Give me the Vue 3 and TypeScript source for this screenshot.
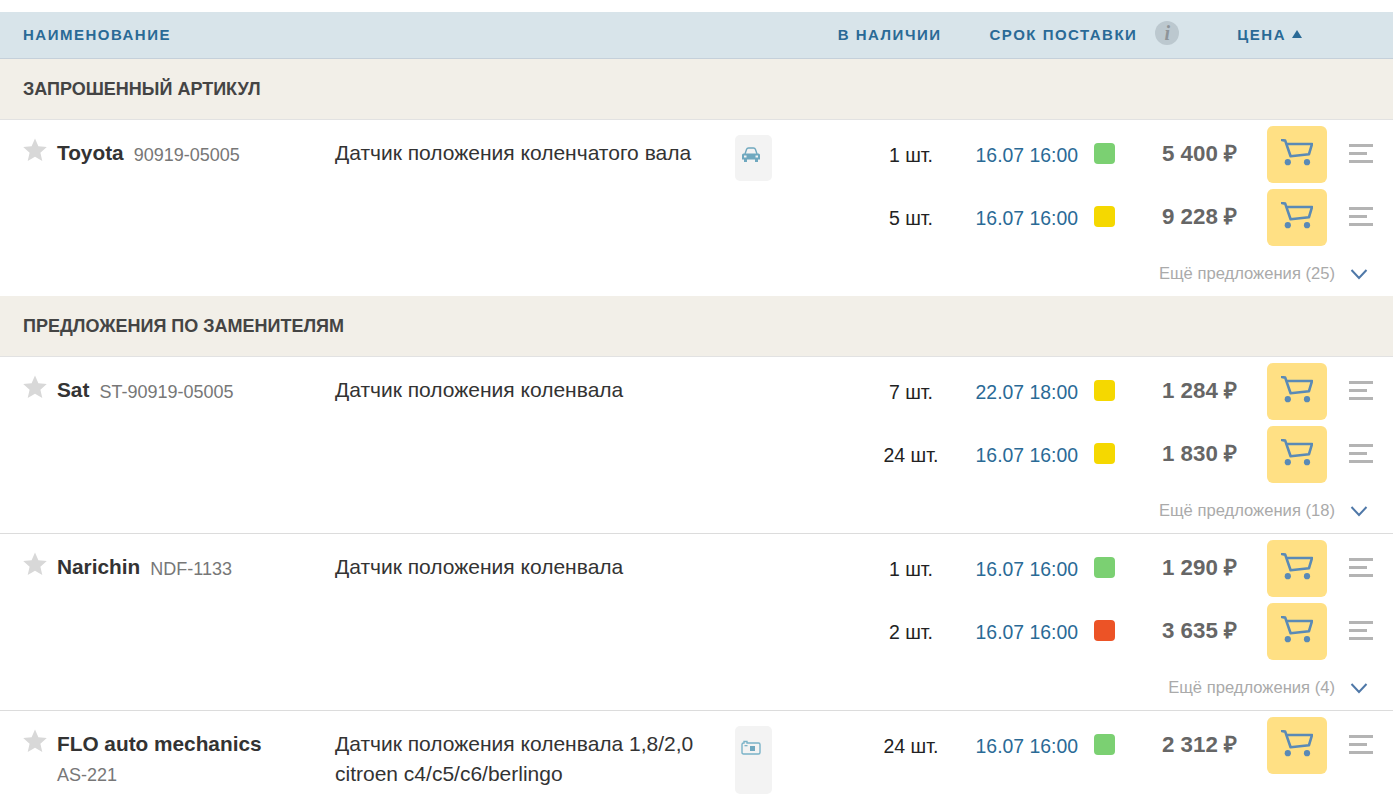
<script setup lang="ts">
interface Offer { qty: string; date: string; status: string; price: string }
interface Item {
  brand: string; art: string; stacked?: boolean; desc: string; badge?: 'car' | 'box';
  offers: Offer[]; more?: string;
}
interface Section { title: string; items: Item[] }

const sections: Section[] = [
  {
    title: 'ЗАПРОШЕННЫЙ АРТИКУЛ',
    items: [
      {
        brand: 'Toyota', art: '90919-05005', desc: 'Датчик положения коленчатого вала', badge: 'car',
        offers: [
          { qty: '1 шт.', date: '16.07 16:00', status: 'green', price: '5 400 ₽' },
          { qty: '5 шт.', date: '16.07 16:00', status: 'yellow', price: '9 228 ₽' },
        ],
        more: 'Ещё предложения (25)',
      },
    ],
  },
  {
    title: 'ПРЕДЛОЖЕНИЯ ПО ЗАМЕНИТЕЛЯМ',
    items: [
      {
        brand: 'Sat', art: 'ST-90919-05005', desc: 'Датчик положения коленвала',
        offers: [
          { qty: '7 шт.', date: '22.07 18:00', status: 'yellow', price: '1 284 ₽' },
          { qty: '24 шт.', date: '16.07 16:00', status: 'yellow', price: '1 830 ₽' },
        ],
        more: 'Ещё предложения (18)',
      },
      {
        brand: 'Narichin', art: 'NDF-1133', desc: 'Датчик положения коленвала',
        offers: [
          { qty: '1 шт.', date: '16.07 16:00', status: 'green', price: '1 290 ₽' },
          { qty: '2 шт.', date: '16.07 16:00', status: 'red', price: '3 635 ₽' },
        ],
        more: 'Ещё предложения (4)',
      },
      {
        brand: 'FLO auto mechanics', art: 'AS-221', stacked: true,
        desc: 'Датчик положения коленвала 1,8/2,0 citroen c4/c5/c6/berlingo', badge: 'box',
        offers: [{ qty: '24 шт.', date: '16.07 16:00', status: 'green', price: '2 312 ₽' }],
      },
    ],
  },
]
</script>

<template>
  <div class="page">
    <div class="head">
      <span class="h-name">НАИМЕНОВАНИЕ</span>
      <span class="h-stock">В НАЛИЧИИ</span>
      <span class="h-term">СРОК ПОСТАВКИ</span>
      <span class="h-info">i</span>
      <span class="h-price">ЦЕНА</span>
      <span class="h-tri"></span>
    </div>

    <template v-for="s in sections" :key="s.title">
      <div class="section">{{ s.title }}</div>
      <div v-for="(it, n) in s.items" :key="it.brand" class="item" :class="{ last: n === s.items.length - 1 }">
        <div class="name">
          <svg class="star" viewBox="0 0 24 24" width="24" height="24">
            <polygon points="12,0.5 15.4,8.3 23.8,9.1 17.4,14.7 19.3,23 12,18.7 4.7,23 6.6,14.7 0.2,9.1 8.6,8.3" fill="#d8d8d8" />
          </svg>
          <div class="brandline" :class="{ stacked: it.stacked }">
            <span class="brand">{{ it.brand }}</span>
            <span class="art">{{ it.art }}</span>
          </div>
        </div>
        <div class="desc">{{ it.desc }}</div>
        <div class="badgecell">
          <div v-if="it.badge" class="badge" :class="it.badge">
            <svg v-if="it.badge === 'car'" viewBox="0 0 20 16" width="20" height="16">
              <path d="M4 7 L5.5 2.5 Q6 1 7.5 1 H12.5 Q14 1 14.5 2.5 L16 7" fill="none" stroke="#6fa8bf" stroke-width="1.4" />
              <path d="M2.5 6.5 H17.5 Q19 6.5 19 8 V12.5 H17 V15 H14 V12.5 H6 V15 H3 V12.5 H1 V8 Q1 6.5 2.5 6.5 Z" fill="#6fa8bf" />
              <rect x="3" y="8.5" width="2.5" height="2" fill="#f3f3f3" />
              <rect x="14.5" y="8.5" width="2.5" height="2" fill="#f3f3f3" />
            </svg>
            <svg v-else viewBox="0 0 20 16" width="20" height="16">
              <path d="M3 3 V1.5 H6 V3 H17.5 Q19 3 19 4.5 V12.5 Q19 14 17.5 14 H2.5 Q1 14 1 12.5 V4.5 Q1 3 2.5 3 Z" fill="none" stroke="#7ab3c8" stroke-width="1.4" />
              <rect x="3.5" y="5" width="3" height="1.3" fill="#7ab3c8" />
              <rect x="9" y="6" width="5" height="5" fill="#6fa8bf" />
            </svg>
          </div>
        </div>
        <div class="offers">
          <div v-for="(o, i) in it.offers" :key="i" class="offer">
            <span class="qty">{{ o.qty }}</span>
            <span class="date">{{ o.date }}</span>
            <span class="status" :class="o.status"></span>
            <span class="price">{{ o.price }}</span>
            <button class="buy" type="button" aria-label="В корзину">
              <svg viewBox="0 0 32 27" width="32" height="27">
                <path d="M0.8 1 L4.2 1.6 L9.6 17.2 L28 15.2 L31 5 H6" fill="none" stroke="#5a8ab6" stroke-width="2.6" stroke-linejoin="round" stroke-linecap="round" />
                <circle cx="6.8" cy="23.2" r="3.1" fill="#5a8ab6" />
                <circle cx="26" cy="23.2" r="3.1" fill="#5a8ab6" />
              </svg>
            </button>
            <span class="menu"><i></i><i class="short"></i><i></i></span>
          </div>
          <div v-if="it.more" class="more">
            <span>{{ it.more }}</span>
            <svg viewBox="0 0 18 12" width="18" height="12">
              <path d="M1.5 2 L9 10 L16.5 2" fill="none" stroke="#4f78a8" stroke-width="2" />
            </svg>
          </div>
        </div>
      </div>
    </template>
  </div>
</template>

<style>
html, body { margin: 0; background: #fff; overflow: hidden; }
</style>

<style scoped>
.page {
  height: 800px;
  overflow: hidden;
  padding-top: 12px;
  box-sizing: border-box;
  font-family: "Liberation Sans", Arial, sans-serif;
}
.head {
  display: flex;
  align-items: center;
  height: 44px;
  background: #d8e4ea;
  border-bottom: 1px solid #c5d0da;
  padding: 0 0 2px 23px;
  font-size: 15px;
  font-weight: 700;
  letter-spacing: 1.5px;
  color: #2a6a96;
}
.h-name { margin-right: auto; }
.h-term { margin-left: 48px; }
.h-info {
  width: 24px;
  height: 24px;
  margin: -3px 0 0 18px;
  border-radius: 50%;
  background: #bcc8cf;
  color: #8e9499;
  font: italic 700 20px/24px "Liberation Serif", serif;
  letter-spacing: 0;
  text-align: center;
}
.h-price { margin-left: 58px; }
.h-tri {
  width: 0;
  height: 0;
  margin: 0 91px 0 6px;
  border-left: 5px solid transparent;
  border-right: 5px solid transparent;
  border-bottom: 8px solid #2a6a96;
}
.section {
  height: 60px;
  line-height: 61px;
  padding-left: 23px;
  background: #f2efe8;
  border-bottom: 1px solid #e2e2e2;
  font-size: 18px;
  font-weight: 700;
  color: #444;
}
.item {
  display: flex;
  height: 176px;
  border-bottom: 1px solid #dcdcdc;
  color: #333;
}
.item.last { border-bottom: 0; }
.name {
  display: flex;
  width: 335px;
  flex: none;
  padding: 18px 0 0 23px;
  box-sizing: border-box;
}
.star { flex: none; margin-right: 10px; }
.brandline { display: flex; align-items: center; gap: 10px; height: 30px; line-height: 30px; }
.brandline.stacked { display: block; height: auto; }
.brand { font-size: 20.8px; font-weight: 700; color: #333; white-space: nowrap; }
.art { font-size: 18px; color: #777; white-space: nowrap; margin-top: 4px; }
.stacked .brand, .stacked .art { display: block; }
.stacked .art { margin-top: 1px; }
.desc {
  width: 400px;
  flex: none;
  padding-top: 18px;
  font-size: 21px;
  line-height: 30px;
  color: #333;
}
.badgecell { width: 37px; flex: none; padding-top: 15px; }
.badge {
  width: 37px;
  height: 46px;
  background: #f3f3f3;
  border-radius: 5px;
  display: flex;
  justify-content: flex-start;
  align-items: flex-start;
  padding: 12px 0 0 6px;
  box-sizing: border-box;
}
.badge.box { height: 68px; padding-top: 14px; }
.offers { margin-left: auto; padding: 6px 20px 0 0; }
.offer {
  display: grid;
  grid-template-columns: 100px 118px 37px 152px 60px 46px;
  align-items: center;
  height: 57px;
  margin-bottom: 6px;
}
.qty { text-align: center; font-size: 19.5px; color: #222; white-space: nowrap; margin-top: 2px; padding-left: 2px; }
.date { text-align: right; font-size: 19.4px; color: #2a6a96; white-space: nowrap; margin-top: 2px; }
.status { width: 21px; height: 21px; border-radius: 4px; margin: 0 0 3px 16px; }
.status.green { background: #7bd072; }
.status.yellow { background: #f5d800; }
.status.red { background: #ec5326; }
.price { text-align: right; font-size: 22.3px; font-weight: 700; color: #666; white-space: nowrap; margin: 0 30px 4px 0; }
.buy {
  width: 60px;
  height: 57px;
  padding: 0 0 5px;
  border: 0;
  border-radius: 6px;
  background: #ffe084;
  display: flex;
  align-items: center;
  justify-content: center;
}
.menu {
  display: flex;
  flex-direction: column;
  align-items: flex-start;
  gap: 5px;
  margin: 0 0 2px 22px;
}
.menu i { display: block; width: 24px; height: 3px; background: #b4b4b4; }
.menu i.short { width: 18px; }
.more {
  display: flex;
  justify-content: flex-end;
  align-items: center;
  gap: 15px;
  height: 43px;
  padding-right: 5px;
  font-size: 16.6px;
  color: #aaa;
}
</style>
